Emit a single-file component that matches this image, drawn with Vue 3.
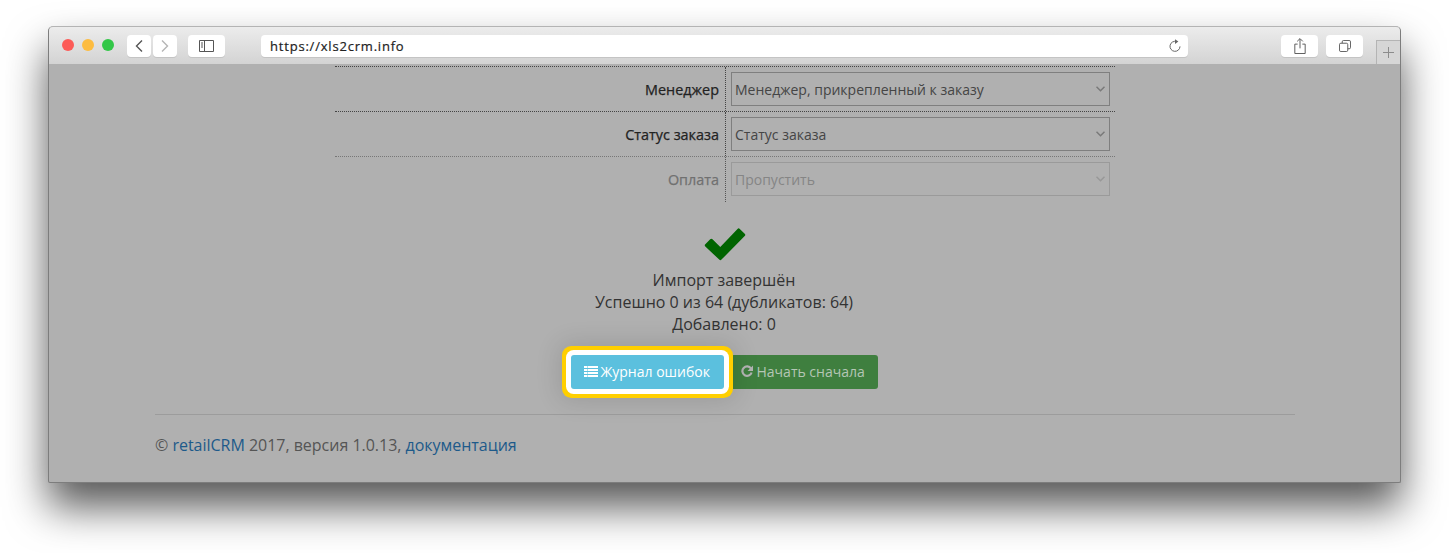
<script setup>
const rows = [
  { label: 'Менеджер', value: 'Менеджер, прикрепленный к заказу', off: false },
  { label: 'Статус заказа', value: 'Статус заказа', off: false },
  { label: 'Оплата', value: 'Пропустить', off: true },
]
</script>

<template>
  <div class="page">
    <div class="window">
      <header class="toolbar">
        <div class="dots">
          <span class="dot red"></span>
          <span class="dot yellow"></span>
          <span class="dot green"></span>
        </div>
        <div class="nav">
          <button class="tb nav-btn">
            <svg width="8" height="12" viewBox="0 0 8 12"><path d="M7 .5 1.500 6 7 11.500" fill="none" stroke="#555" stroke-width="1.4"/></svg>
          </button>
          <button class="tb nav-btn">
            <svg width="8" height="12" viewBox="0 0 8 12"><path d="M1 .5 6.500 6 1 11.500" fill="none" stroke="#b5b5b5" stroke-width="1.4"/></svg>
          </button>
        </div>
        <button class="tb side-btn">
          <svg width="15" height="12" viewBox="0 0 15 12"><path d="M.5.5h14v11H.5zM5.500.5v11" fill="none" stroke="#555"/><path d="M2 3h2M2 5h2M2 7h2" stroke="#555"/></svg>
        </button>
        <div class="tb address">
          <span class="url">https://xls2crm.info</span>
          <svg width="14" height="14" viewBox="0 0 14 14"><path d="M8.6 2.600A5 5 0 1 0 12 7.400" fill="none" stroke="#666"/><path d="M7 .3l3.400 2.300L7 4.900z" fill="#666"/></svg>
        </div>
        <button class="tb act-btn">
          <svg width="12" height="16" viewBox="0 0 12 17"><path d="M3.500 6.500H.5v10h11v-10h-3" fill="none" stroke="#555"/><path d="M6 1v10" stroke="#555"/><path d="M3 3.600 6 .6l3 3" fill="none" stroke="#555"/></svg>
        </button>
        <button class="tb act-btn">
          <svg width="12" height="12" viewBox="0 0 13 13"><rect x=".5" y="3.500" width="9" height="9" rx="1.500" fill="none" stroke="#555"/><path d="M3.500 3.500V2A1.500 1.500 0 0 1 5 .5h6A1.500 1.500 0 0 1 12.500 2v6A1.500 1.500 0 0 1 11 9.500H9.500" fill="none" stroke="#555"/></svg>
        </button>
        <div class="newtab">
          <svg width="11" height="11" viewBox="0 0 11 11"><path d="M5.500 0v11M0 5.500h11" stroke="#8c8c8c"/></svg>
        </div>
      </header>

      <main class="content">
        <div class="form">
          <div v-for="r in rows" :key="r.label" class="row" :class="{ off: r.off }">
            <label class="label">{{ r.label }}</label>
            <div class="field">
              <div class="select">
                <span>{{ r.value }}</span>
                <svg class="chev" width="9" height="6" viewBox="0 0 9 6"><path d="M.5.8 4.500 4.800 8.500.8" fill="none" stroke="currentColor" stroke-width="1.500"/></svg>
              </div>
            </div>
          </div>
        </div>

        <div class="result">
          <svg class="check" width="42" height="33" viewBox="0 0 42 33"><path d="M1.300 16.200 6.200 11.300a1.600 1.600 0 0 1 2.300 0l7.800 7.800L33.500.9a1.600 1.600 0 0 1 2.300 0l4.900 4.900a1.600 1.600 0 0 1 0 2.300L17.500 31.600a1.600 1.600 0 0 1-2.300 0L1.300 18.500a1.600 1.600 0 0 1 0-2.300z" fill="#006400"/></svg>
          <p>Импорт завершён</p>
          <p>Успешно 0 из 64 (дубликатов: 64)</p>
          <p>Добавлено: 0</p>
          <div class="actions">
            <button class="btn btn2">
              <svg width="12" height="12" viewBox="0 0 12 12"><path d="M10 3.500A4.700 4.700 0 1 0 10.600 7.500" fill="none" stroke="#b4b4b4" stroke-width="2.200"/><path d="M12 .5V6H6.500z" fill="#b4b4b4"/></svg>
              Начать сначала
            </button>
            <button class="btn btn1">
              <svg width="14" height="11" viewBox="0 0 14 11"><path d="M0 0h3v2H0zM3.500 0H14v2H3.500zM0 3h3v2H0zM3.500 3H14v2H3.500zM0 6h3v2H0zM3.500 6H14v2H3.500zM0 9h3v2H0zM3.500 9H14v2H3.500z" fill="#fff"/></svg>
              Журнал ошибок
            </button>
          </div>
        </div>

        <footer class="footer">
          <hr class="rule" />
          <p>© <a href="#">retailCRM</a> 2017, версия 1.0.13, <a href="#">документация</a></p>
        </footer>
      </main>
    </div>
  </div>
</template>

<style>
html, body { margin: 0; background: #fff; }
</style>

<style scoped>
.page {
  width: 1449px;
  height: 553px;
  box-sizing: border-box;
  padding: 26px 48px 0;
  background: #fff;
  overflow: hidden;
  font-family: "Open Sans", "Noto Sans", sans-serif;
}
.window {
  width: 1353px;
  height: 457px;
  box-sizing: border-box;
  border: 1px solid #7d7d7d;
  border-top-color: #b4b4b4;
  border-radius: 5px 5px 2px 2px;
  background: #b0b0b0;
  box-shadow: 0 24px 42px rgba(0, 0, 0, 0.66);
  overflow: hidden;
  display: flex;
  flex-direction: column;
}
.toolbar {
  height: 37px;
  flex: none;
  display: flex;
  align-items: flex-start;
  padding: 8px 0 0 13px;
  box-sizing: border-box;
  background: linear-gradient(#ececec, #d3d3d3);
}
.dots { display: flex; gap: 8px; margin-top: 4px; }
.dot { width: 12px; height: 12px; border-radius: 50%; }
.red { background: #fc5b57; }
.yellow { background: #fdbc40; }
.green { background: #33c748; }
.tb {
  height: 22px;
  padding: 0;
  border: 0;
  border-radius: 4px;
  background: #fff;
  box-shadow: 0 1px 0 #c4c4c4;
  display: flex;
  align-items: center;
  justify-content: center;
}
.nav { display: flex; gap: 2px; margin-left: 13px; }
.nav-btn { width: 24px; }
.side-btn { width: 37px; margin-left: 11px; }
.address {
  width: 927px;
  margin-left: 36px;
  box-sizing: border-box;
  padding: 0 6px 0 9px;
  justify-content: space-between;
}
.url {
  font-size: 13px;
  letter-spacing: 0.8px;
  color: #222;
  -webkit-text-stroke: 0.2px #222;
}
.act-btn { width: 37px; margin-right: 8px; }
.address + .act-btn { margin-left: 93px; }
.newtab {
  width: 24px;
  height: 24px;
  margin-top: 5px;
  margin-left: 5px;
  box-sizing: border-box;
  border: 1px solid #b4b4b4;
  border-bottom: 0;
  border-right: 0;
  background: #d6d6d6;
  display: flex;
  align-items: center;
  justify-content: center;
}
.content { flex: 1; color: #333; font-size: 16px; }
.form {
  width: 780px;
  margin: 2px auto 0 286px;
  border-top: 1px dotted #444;
}
.row {
  display: flex;
  height: 45px;
  box-sizing: border-box;
  border-bottom: 1px dotted #444;
}
.row:nth-child(2) { border-bottom-color: #777; }
.row.off { border-bottom: 0; color: #707070; }
.label {
  width: 391px;
  flex: none;
  box-sizing: border-box;
  padding-right: 6px;
  border-right: 1px dotted #444;
  text-align: right;
  font-size: 14.4px;
  font-weight: 400;
  -webkit-text-stroke: 0.25px currentColor;
  line-height: 45px;
  color: #222;
}
.row.off .label { color: #707070; border-right-color: #555; }
.field { padding: 5px 0 0 5px; }
.select {
  width: 379px;
  height: 34px;
  box-sizing: border-box;
  border: 1px solid #7f7f7f;
  padding: 0 4px 0 3px;
  display: flex;
  align-items: center;
  justify-content: space-between;
  font-size: 14px;
  color: #454545;
}
.row.off .select { border-color: #9a9a9a; color: #858585; }
.chev { color: #7a7a7a; }
.row.off .chev { color: #989898; }
.result { text-align: center; margin-top: 26px; margin-left: -1px; }
.check { display: block; margin: 0 auto 8px; position: relative; left: 1px; }
.result p { margin: 0; line-height: 22px; }
.actions {
  display: flex;
  flex-direction: row-reverse;
  justify-content: center;
  margin: 20px 0 0 0;
}
.btn {
  height: 34px;
  box-sizing: border-box;
  border: 0;
  border-radius: 3px;
  font-family: inherit;
  font-size: 14px;
  display: flex;
  align-items: center;
  gap: 3px;
}
.btn1 {
  width: 153px;
  padding: 0 0 2px 13px;
  background: #5bc0de;
  color: #fff;
  position: relative;
  z-index: 1;
  box-shadow: 0 0 0 5px #fff, 0 0 0 9px #ffcf00, 0 0 24px 12px rgba(0, 0, 0, 0.12);
}
.btn2 {
  width: 154px;
  padding: 0 0 2px 17px;
  gap: 4px;
  background: #3f7f3f;
  color: #b5c6b5;
  border-radius: 0 3px 3px 0;
}
.footer { width: 1140px; margin: 25px 0 0 106px; }
.rule { margin: 0; border: 0; border-top: 1px solid #9c9c9c; }
.footer p { margin: 19px 0 0; line-height: 22px; color: #555; letter-spacing: -0.02px; }
.footer a { color: #1d5a8a; text-decoration: none; }
</style>
